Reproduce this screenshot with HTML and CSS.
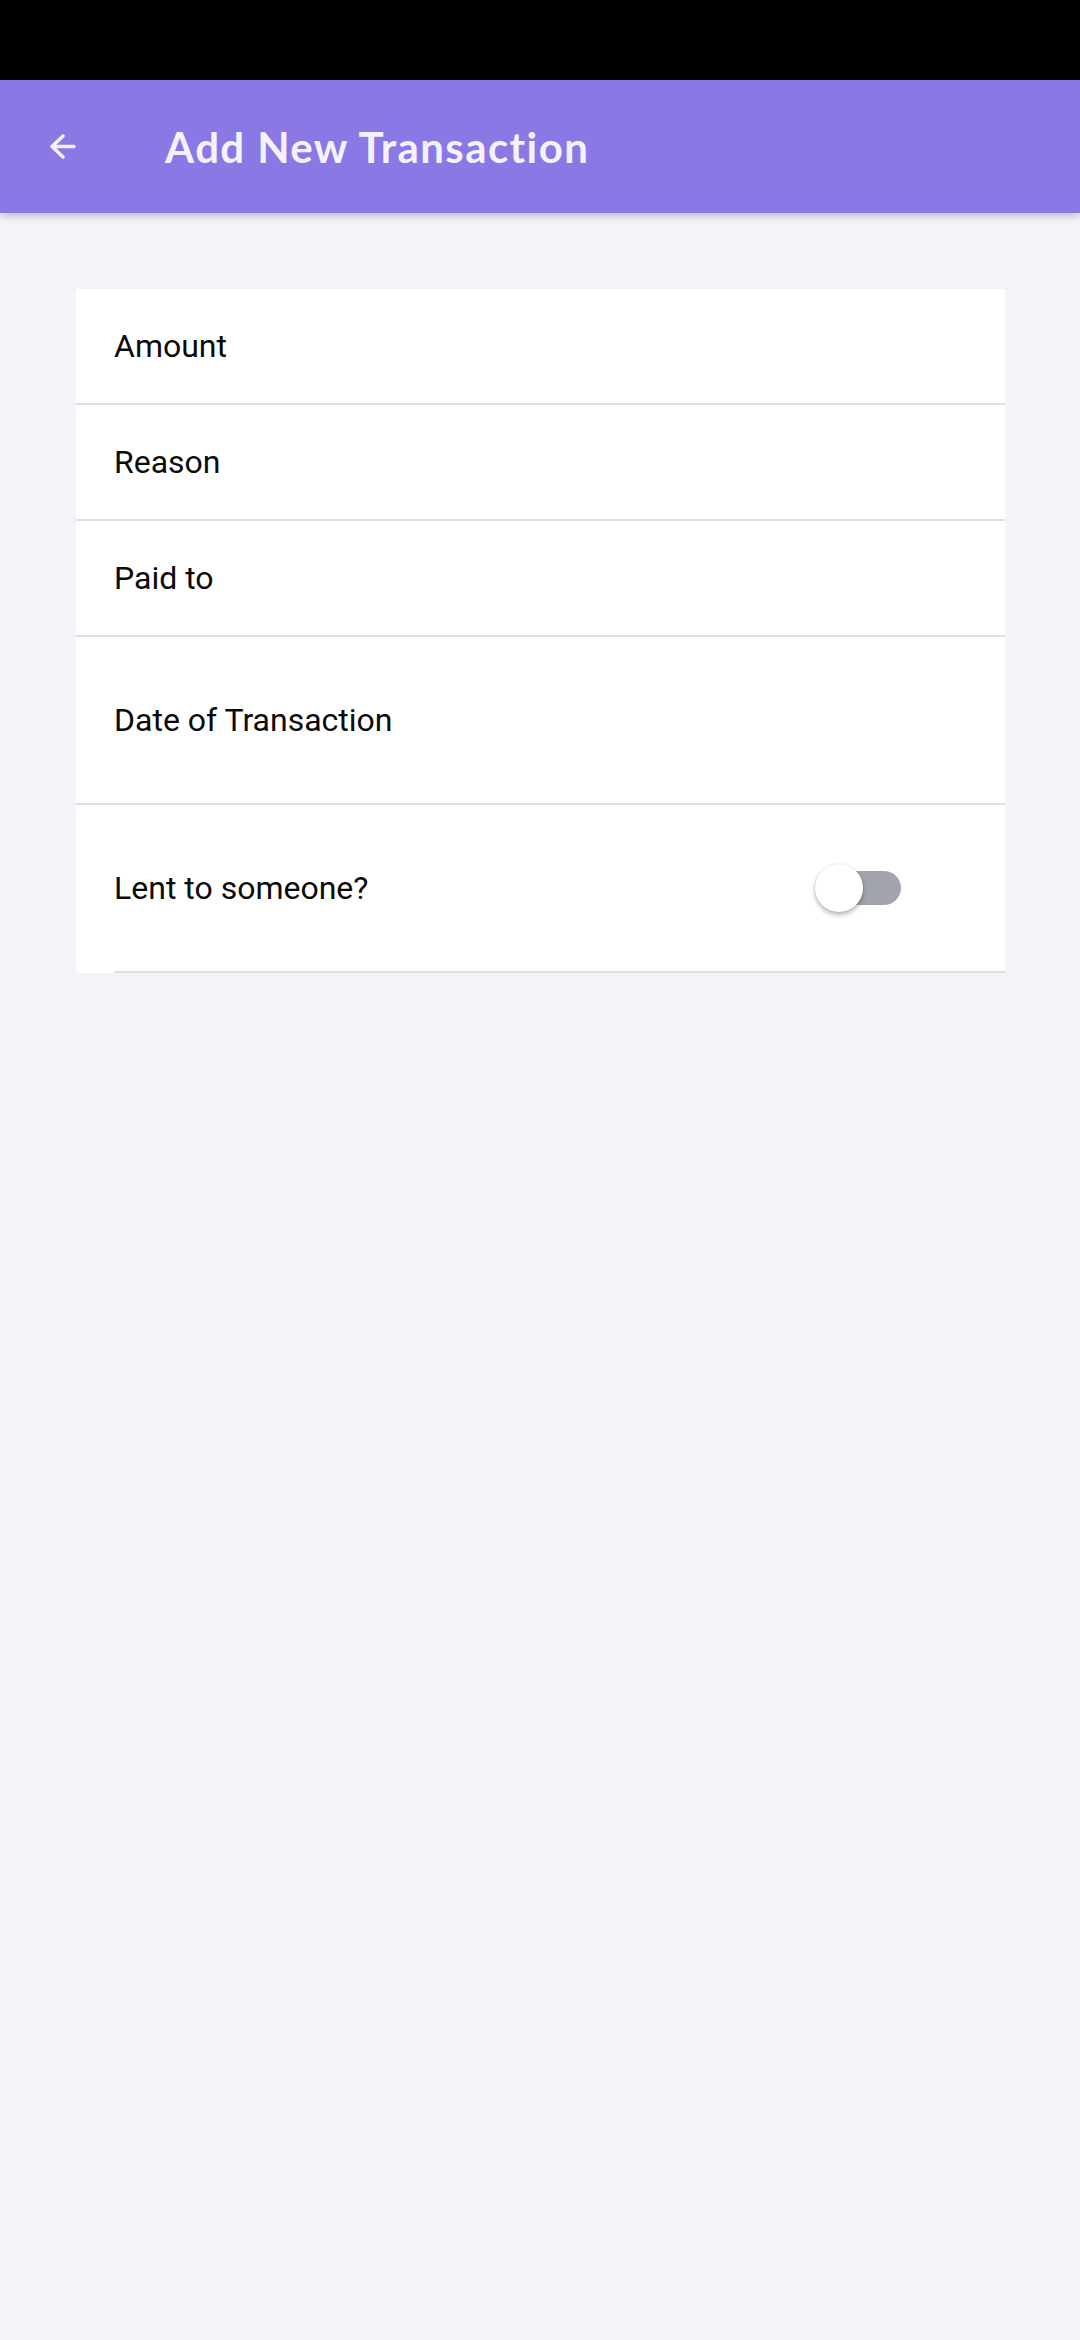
FILE: index.html
```html
<!DOCTYPE html>
<html lang="en">
<head>
<meta charset="utf-8">
<title>Add New Transaction</title>
<link rel="stylesheet" href="styles.css">
</head>
<body>
<div class="status-bar"></div>
<header class="app-bar">
  <button class="back-btn" aria-label="Back">
    <svg width="26" height="26" viewBox="0 0 26 26" fill="none" stroke="currentColor" stroke-width="3.4" stroke-linecap="round" stroke-linejoin="round">
      <path d="M24 12.5H3"/>
      <path d="M13 2L2 12.5L13 23"/>
    </svg>
  </button>
  <h1 class="title">Add New Transaction</h1>
</header>
<main class="content">
  <section class="card">
    <div class="field">Amount</div>
    <div class="field">Reason</div>
    <div class="field">Paid to</div>
    <div class="field field-tall">Date of Transaction</div>
    <div class="field field-switch">
      <span>Lent to someone?</span>
      <span class="switch">
        <span class="switch-track"></span>
        <span class="switch-thumb"></span>
      </span>
    </div>
  </section>
</main>
</body>
</html>
```
FILE: styles.css
```css
* { box-sizing: border-box; }
html, body {
  margin: 0;
  padding: 0;
}
body {
  background: #f3f4f8;
  font-family: Roboto, "Noto Sans", sans-serif;
  width: 1080px;
  min-height: 2340px;
}
.status-bar {
  height: 80px;
  background: #000;
}
.app-bar {
  position: relative;
  height: 133px;
  background: #8a78e5;
  display: flex;
  align-items: center;
  box-shadow: 0 3px 8px rgba(0, 0, 0, 0.22);
  z-index: 1;
}
.back-btn {
  border: 0;
  background: none;
  padding: 0;
  margin-left: 50px;
  width: 26px;
  height: 26px;
  color: #f3f1ff;
  display: flex;
}
.title {
  margin: 0 0 0 89px;
  font-family: Lato, "Open Sans", sans-serif;
  font-weight: 700;
  font-size: 42px;
  color: #f4f2ff;
  letter-spacing: 1.4px;
}
.content {
  padding: 76px 75px 0 76px;
}
.card {
  background: #fff;
  display: flex;
  flex-direction: column;
}
.field {
  height: 116px;
  padding-left: 38px;
  display: flex;
  align-items: center;
  border-bottom: 2px solid #e0e0e0;
  font-size: 32px;
  color: #0a0a0a;
}
.field-tall {
  height: 168px;
}
.field-switch {
  height: 168px;
  margin-left: 38px;
  padding-left: 0;
  padding-right: 104px;
  justify-content: space-between;
}
.switch {
  position: relative;
  width: 86px;
  height: 48px;
  display: flex;
  align-items: center;
}
.switch-track {
  margin-left: 4px;
  width: 82px;
  height: 34px;
  border-radius: 17px;
  background: #a1a4ab;
}
.switch-thumb {
  position: absolute;
  left: 0;
  top: 0;
  width: 48px;
  height: 48px;
  border-radius: 50%;
  background: #fff;
  box-shadow: 0 3px 5px rgba(0, 0, 0, 0.28), 0 0 2px rgba(0, 0, 0, 0.12);
}
```
